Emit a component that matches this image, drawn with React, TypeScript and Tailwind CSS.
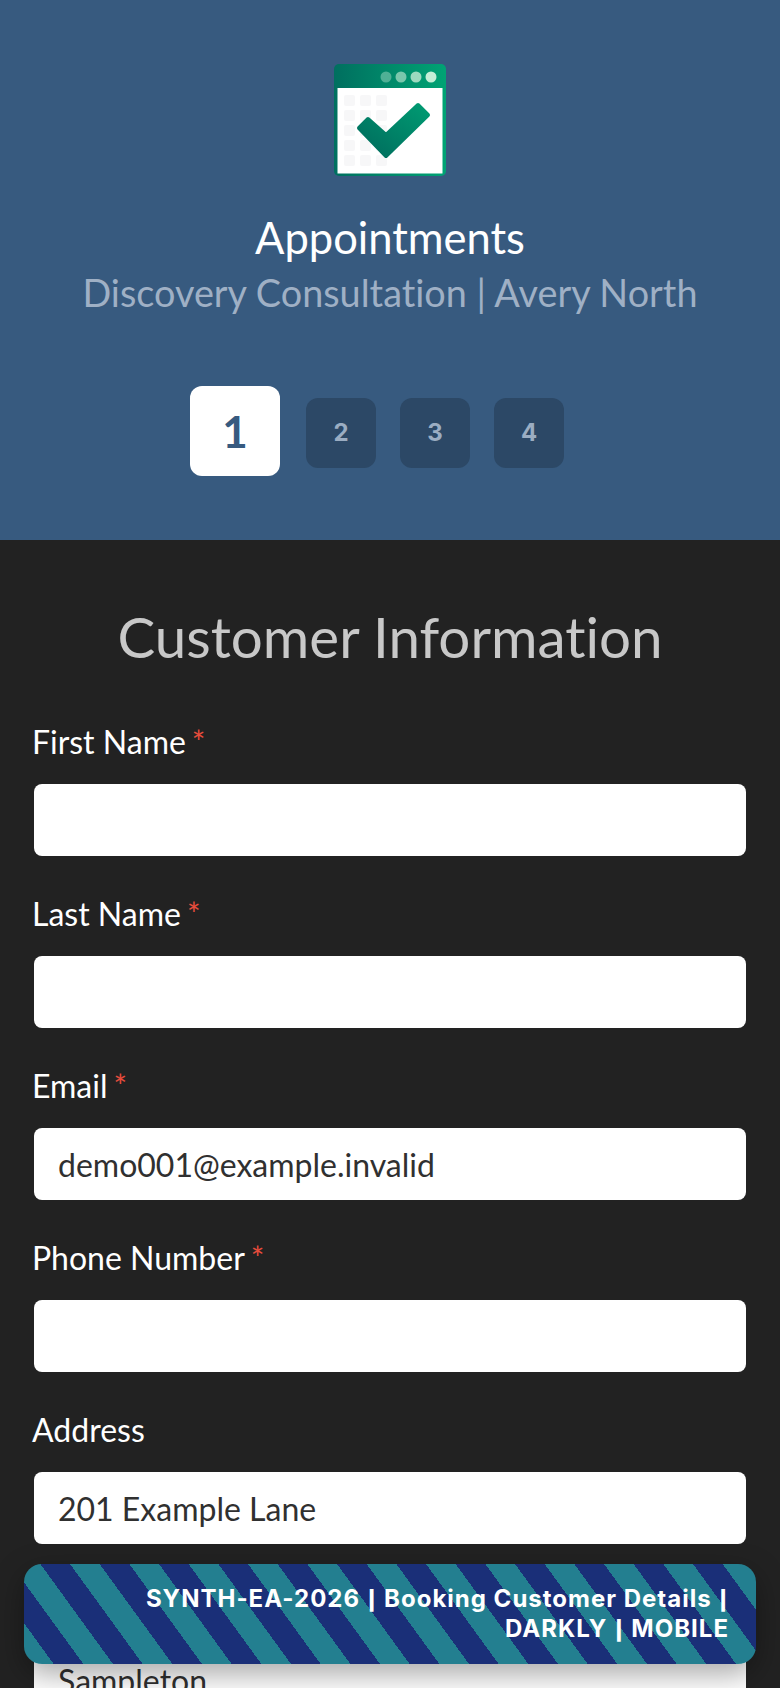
import React from "react"

const lato = "font-['Lato','Noto_Sans',sans-serif] [font-variant-ligatures:none]"

const fields = [
  { label: "First Name", required: true, value: "" },
  { label: "Last Name", required: true, value: "" },
  { label: "Email", required: true, value: "demo001@example.invalid" },
  { label: "Phone Number", required: true, value: "" },
  { label: "Address", required: false, value: "201 Example Lane" },
  { label: "City", required: false, value: "Sampleton" },
]

function CalendarIcon() {
  const cols = [10, 26, 42]
  const rows = [31, 46, 61, 76, 91]
  return (
    <svg width="112" height="112" viewBox="0 0 112 112" className="block">
      <defs>
        <linearGradient id="cal" x1="0" y1="0" x2="1" y2="0">
          <stop offset="0" stopColor="#006f5f" />
          <stop offset="1" stopColor="#00a374" />
        </linearGradient>
        <linearGradient id="tick" x1="0" y1="1" x2="1" y2="0">
          <stop offset="0" stopColor="#006a5c" />
          <stop offset="1" stopColor="#009b72" />
        </linearGradient>
      </defs>
      <rect width="112" height="112" rx="5" fill="url(#cal)" />
      <rect x="3.5" y="24" width="105" height="85.5" fill="#fff" />
      {rows.map((y) =>
        cols.map((x) => (
          <rect key={x + "-" + y} x={x} y={y} width="11" height="11" rx="2" fill="#f7f7f8" />
        ))
      )}
      <circle cx="52" cy="13" r="5.5" fill="#4fb095" />
      <circle cx="67" cy="13" r="5.5" fill="#79c7ac" />
      <circle cx="82" cy="13" r="5.5" fill="#9cdabf" />
      <circle cx="97" cy="13" r="5.5" fill="#c3eed6" />
      <path
        d="M25 64 L34 55 L52 71 L84 41 L94 51 L52 92 Z"
        fill="url(#tick)"
        stroke="url(#tick)"
        strokeWidth="4"
        strokeLinejoin="round"
      />
    </svg>
  )
}

function Steps() {
  return (
    <div className="flex items-center justify-center pr-[26px]">
      <div className={`flex h-[90px] w-[90px] items-center justify-center rounded-[12px] bg-white text-[44px] font-bold text-[#375a7f] ${lato}`}>
        1
      </div>
      <div className="ml-[26px] mt-[4px] flex gap-[24px]">
        {[2, 3, 4].map((n) => (
          <div
            key={n}
            className="flex h-[70px] w-[70px] items-center justify-center rounded-[12px] bg-[#2c4866] font-['Inter',sans-serif] text-[24px] font-bold text-[#9badc2]"
          >
            {n}
          </div>
        ))}
      </div>
    </div>
  )
}

function Field({ label, required, value }: { label: string; required: boolean; value: string }) {
  return (
    <div className="flex flex-col">
      <label className="h-[40px] text-[32px] leading-[40px] text-white">
        {label}
        {required && <span className="ml-[6px] text-[#e74c3c]">*</span>}
      </label>
      <input
        readOnly
        value={value}
        className="mt-[20px] h-[76px] w-full rounded-[10px] border-2 border-transparent bg-white bg-clip-padding px-[24px] text-[32px] text-[#303030] outline-none [font-variant-ligatures:none]"
      />
    </div>
  )
}

function Pipe() {
  return <span className="mx-[1px] text-[19px] font-black leading-none">|</span>
}

export default function App() {
  return (
    <div className={`relative h-[1688px] w-full overflow-hidden bg-[#222222] ${lato}`}>
      <header className="flex h-[540px] flex-col items-center bg-[#375a7f] pt-[64px]">
        <CalendarIcon />
        <h1 className="mt-[35px] text-[43.5px] leading-[52px] text-white">Appointments</h1>
        <p className="mt-[4px] text-[37.8px] leading-[52px] text-[#9fb0c5]">Discovery Consultation | Avery North</p>
        <div className="mt-[67px] w-full">
          <Steps />
        </div>
      </header>

      <main className="px-[32px] pt-[52px]">
        <h2 className="text-center text-[56.5px] leading-[88px] text-[#c8c8c8]">Customer Information</h2>
        <div className="mt-[42px] flex flex-col gap-[36px]">
          {fields.map((f) => (
            <Field key={f.label} {...f} />
          ))}
        </div>
      </main>

      <div className="absolute bottom-[24px] left-[24px] right-[24px] rounded-[18px] bg-[repeating-linear-gradient(54deg,#237f90_0,#237f90_24px,#1a2f78_24px,#1a2f78_48px)] py-[20px] pl-[100px] pr-[27px] text-right font-['Inter',sans-serif] text-[24px] font-bold leading-[30px] tracking-[1px] text-white shadow-[0_10px_30px_rgba(0,0,0,0.35)]">
        SYNTH-EA-2026 <Pipe /> Booking Customer Details <Pipe /> DARKLY <Pipe /> MOBILE
      </div>
    </div>
  )
}
